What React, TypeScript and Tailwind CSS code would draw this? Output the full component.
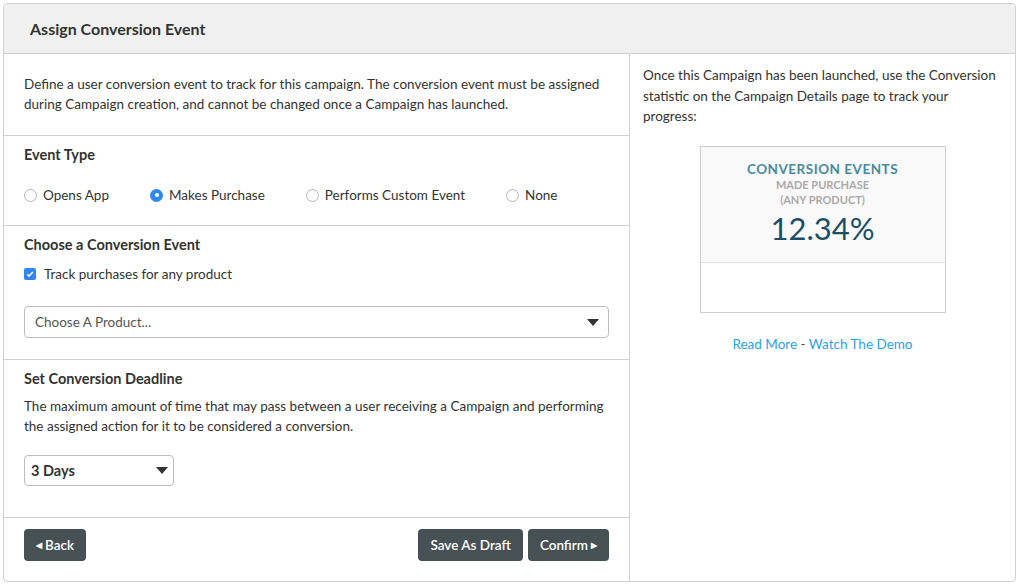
import React from 'react';

const font = { fontFamily: 'Lato, "Open Sans", sans-serif' };

const Radio = ({ label, checked }: { label: string; checked?: boolean }) => (
  <label className="flex items-center gap-[6px] text-[13.5px] text-[#333]">
    {checked ? (
      <span className="w-[13px] h-[13px] rounded-full bg-[#2f87f0] flex items-center justify-center">
        <span className="w-[4px] h-[4px] rounded-full bg-white" />
      </span>
    ) : (
      <span className="w-[13px] h-[13px] rounded-full border border-[#b5b5b5] bg-white" />
    )}
    {label}
  </label>
);

const Caret = () => (
  <svg width="12" height="7" viewBox="0 0 12 7">
    <path d="M0 0h12L6 7z" fill="#333" />
  </svg>
);

const Button = ({ children }: { children: React.ReactNode }) => (
  <button className="h-[32px] px-[12px] rounded-[4px] bg-[#465055] text-white text-[13.5px] font-semibold flex items-center gap-[3px]">
    {children}
  </button>
);

const App = () => {
  return (
    <div className="w-[1018px] h-[585px] bg-white pt-[3px] pl-[3px]" style={font}>
      <div className="w-[1013px] h-[579px] border border-[#d0d0d0] rounded-[4px] overflow-hidden flex flex-col">
        <div className="h-[50px] bg-[#f0f0f0] border-b border-[#d0d0d0] flex items-center pl-[26px]">
          <h1 className="text-[16px] font-bold text-[#333]">Assign Conversion Event</h1>
        </div>
        <div className="flex flex-1">
          <div className="w-[625px] flex flex-col">
            <div className="px-[20px] pt-[20px] pb-[21px] border-b border-[#d0d0d0] text-[13.5px] leading-[20px] text-[#333]">
              Define a user conversion event to track for this campaign. The conversion event must be assigned
              during Campaign creation, and cannot be changed once a Campaign has launched.
            </div>
            <div className="px-[20px] pt-[9px] pb-[20px] border-b border-[#d0d0d0]">
              <h2 className="text-[14.5px] font-bold leading-[20px] text-[#333]">Event Type</h2>
              <div className="mt-[20px] h-[20px] flex items-center gap-[41px]">
                <Radio label="Opens App" />
                <Radio label="Makes Purchase" checked />
                <Radio label="Performs Custom Event" />
                <Radio label="None" />
              </div>
            </div>
            <div className="px-[20px] pt-[9px] pb-[21px] border-b border-[#d0d0d0]">
              <h2 className="text-[14.5px] font-bold leading-[20px] text-[#333]">Choose a Conversion Event</h2>
              <label className="mt-[9px] h-[20px] flex items-center gap-[8px] text-[13.5px] text-[#333]">
                <span className="w-[12px] h-[12px] rounded-[2px] bg-[#2f87f0] flex items-center justify-center">
                  <svg width="8" height="8" viewBox="0 0 8 8">
                    <path d="M1.2 4.2l1.9 1.9 3.7-4.2" fill="none" stroke="white" strokeWidth="1.5" />
                  </svg>
                </span>
                Track purchases for any product
              </label>
              <div className="mt-[22px] h-[32px] border border-[#bdbdbd] rounded-[4px] flex items-center justify-between pl-[10px] pr-[9px] text-[13.5px] text-[#555]">
                <span>Choose A Product...</span>
                <Caret />
              </div>
            </div>
            <div className="px-[20px] pt-[9px] pb-[31px] border-b border-[#d0d0d0]">
              <h2 className="text-[14.5px] font-bold leading-[20px] text-[#333]">Set Conversion Deadline</h2>
              <p className="mt-[7px] text-[13.5px] leading-[20px] text-[#333]">
                The maximum amount of time that may pass between a user receiving a Campaign and performing
                the assigned action for it to be considered a conversion.
              </p>
              <div className="mt-[19px] w-[150px] h-[31px] border border-[#bdbdbd] rounded-[4px] flex items-center justify-between pl-[6px] pr-[5px] text-[14.5px] font-bold text-[#333]">
                <span>3 Days</span>
                <Caret />
              </div>
            </div>
            <div className="flex-1 px-[20px] pt-[11px] flex justify-between items-start">
              <Button>
                <span className="text-[8px]">◀</span>Back
              </Button>
              <div className="flex gap-[5px]">
                <Button>Save As Draft</Button>
                <Button>
                  Confirm<span className="text-[8px]">▶</span>
                </Button>
              </div>
            </div>
          </div>
          <div className="flex-1 border-l border-[#d0d0d0] flex flex-col">
            <p className="pl-[13px] pr-[16px] pt-[11px] text-[13.5px] leading-[20.5px] text-[#333]">
              Once this Campaign has been launched, use the Conversion statistic on the Campaign Details page to track your
              progress:
            </p>
            <div className="mt-[19px] self-center w-[246px] h-[167px] border border-[#cfcfcf] flex flex-col">
              <div className="h-[116px] bg-[#f9f9f9] border-b border-[#e2e2e2] flex flex-col items-center pt-[14px]">
                <div className="text-[13.5px] font-bold tracking-[0.5px] text-[#4a8aa0] leading-[16px]">CONVERSION EVENTS</div>
                <div className="text-[11px] font-bold text-[#a9a9a9] leading-[15px]">MADE PURCHASE</div>
                <div className="text-[11px] font-bold text-[#a9a9a9] leading-[15px]">(ANY PRODUCT)</div>
                <div className="text-[31px] text-[#1d4e69] leading-[36px] mt-[3px]">12.34%</div>
              </div>
            </div>
            <div className="mt-[21px] text-center text-[13.5px] text-[#2e9fe8]">
              Read More <span className="text-[#555]">-</span> Watch The Demo
            </div>
          </div>
        </div>
      </div>
    </div>
  );
};

export default App;
